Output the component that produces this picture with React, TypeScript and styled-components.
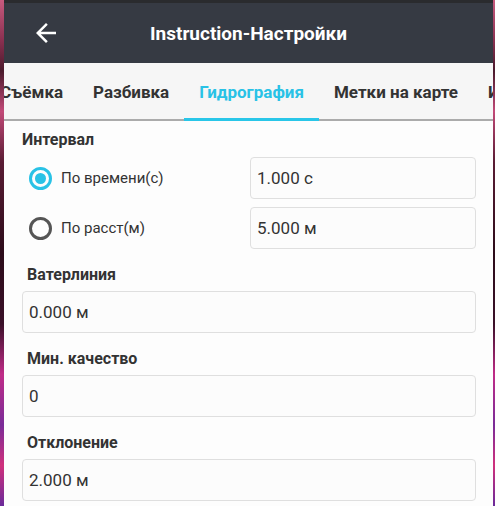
import React from "react";
import styled, { createGlobalStyle } from "styled-components";

const GlobalStyle = createGlobalStyle`
  html, body {
    margin: 0;
    padding: 0;
  }
  body {
    font-family: Roboto, "Noto Sans", "Liberation Sans", sans-serif;
    background: #2a1020;
  }
`;

const Frame = styled.div`
  display: flex;
  height: 506px;
  padding: 0 2px 0 4px;
  box-sizing: border-box;
  overflow: hidden;
  background: linear-gradient(
    180deg,
    #c75a7e 0%,
    #8a3050 8%,
    #4a1a2c 14%,
    #c24a78 22%,
    #5a1c34 32%,
    #2c0c1a 50%,
    #3a1028 64%,
    #c02c88 74%,
    #7a2c98 84%,
    #d0307c 92%,
    #6a2a9a 100%
  );
`;

const Panel = styled.div`
  flex: 1;
  display: flex;
  flex-direction: column;
  min-width: 0;
  background: #fdfdfd;
  overflow: hidden;
`;

const StatusStrip = styled.div`
  height: 3px;
  background: #2a2b2e;
`;

const Header = styled.div`
  height: 60px;
  display: grid;
  grid-template-columns: 1fr auto 1fr;
  align-items: center;
  background: #363a43;
`;

const BackButton = styled.div`
  display: flex;
  align-items: center;
  padding-left: 27px;
`;

const Title = styled.div`
  color: #ffffff;
  font-size: 19px;
  font-weight: 700;
`;

// strip is scrolled a little to the left, like the reference
const TabBar = styled.div`
  display: flex;
  height: 58px;
  box-sizing: border-box;
  background: #f6f6f6;
  border-bottom: 2px solid #ababab;
  margin-left: -19px;
  white-space: nowrap;
`;

const Tab = styled.div<{ $active?: boolean }>`
  display: flex;
  align-items: center;
  padding: 3px 15px 0;
  margin-bottom: -2px;
  font-size: 17px;
  font-weight: 700;
  color: ${(p) => (p.$active ? "#29c2e6" : "#333333")};
  border-bottom: 3px solid ${(p) => (p.$active ? "#29c6e8" : "transparent")};
`;

const Content = styled.div`
  display: flex;
  flex-direction: column;
  padding: 9px 17px 0 18px;
`;

const SectionLabel = styled.div<{ $indent?: number }>`
  font-size: 16px;
  line-height: 20px;
  font-weight: 700;
  color: #333333;
  padding-left: ${(p) => p.$indent ?? 0}px;
`;

const IntervalGrid = styled.div`
  display: grid;
  grid-template-columns: 1fr 226px;
  row-gap: 8px;
  margin-top: 7px;
  align-items: center;
`;

const RadioRow = styled.div`
  display: flex;
  align-items: center;
  gap: 9px;
  padding-left: 7px;
  font-size: 15px;
  color: #333333;
`;

const RadioCircle = styled.div<{ $checked?: boolean }>`
  width: 23px;
  height: 23px;
  box-sizing: border-box;
  border-radius: 50%;
  border: 3px solid ${(p) => (p.$checked ? "#29c2e6" : "#555555")};
  display: flex;
  align-items: center;
  justify-content: center;

  &::after {
    content: "";
    width: 11px;
    height: 11px;
    border-radius: 50%;
    background: ${(p) => (p.$checked ? "#29c2e6" : "transparent")};
  }
`;

const Field = styled.div`
  height: 42px;
  box-sizing: border-box;
  display: flex;
  align-items: center;
  padding-left: 6px;
  border: 1px solid #dfdfdf;
  border-radius: 4px;
  background: #fcfcfc;
  font-size: 17px;
  color: #333333;
`;

const FieldGroup = styled.div`
  display: flex;
  flex-direction: column;
  gap: 6px;
  margin-top: 16px;
`;

function BackArrow() {
  return (
    <svg width="30" height="30" viewBox="0 0 24 24" fill="#ffffff">
      <path d="M20 11H7.83l5.59-5.59L12 4l-8 8 8 8 1.41-1.41L7.83 13H20v-2z" />
    </svg>
  );
}

const tabs = ["Съёмка", "Разбивка", "Гидрография", "Метки на карте", "Инструменты"];

const fields = [
  { label: "Ватерлиния", value: "0.000 м" },
  { label: "Мин. качество", value: "0" },
  { label: "Отклонение", value: "2.000 м" },
];

export default function App(): JSX.Element {
  return (
    <>
      <GlobalStyle />
      <Frame>
        <Panel>
          <StatusStrip />
          <Header>
            <BackButton>
              <BackArrow />
            </BackButton>
            <Title>Instruction-Настройки</Title>
            <div />
          </Header>

          <TabBar>
            {tabs.map((t) => (
              <Tab key={t} $active={t === "Гидрография"}>
                {t}
              </Tab>
            ))}
          </TabBar>

          <Content>
            <SectionLabel>Интервал</SectionLabel>
            <IntervalGrid>
              <RadioRow>
                <RadioCircle $checked />
                По времени(с)
              </RadioRow>
              <Field>1.000 с</Field>
              <RadioRow>
                <RadioCircle />
                По расст(м)
              </RadioRow>
              <Field>5.000 м</Field>
            </IntervalGrid>

            {fields.map((f) => (
              <FieldGroup key={f.label}>
                <SectionLabel $indent={5}>{f.label}</SectionLabel>
                <Field>{f.value}</Field>
              </FieldGroup>
            ))}
          </Content>
        </Panel>
      </Frame>
    </>
  );
}
